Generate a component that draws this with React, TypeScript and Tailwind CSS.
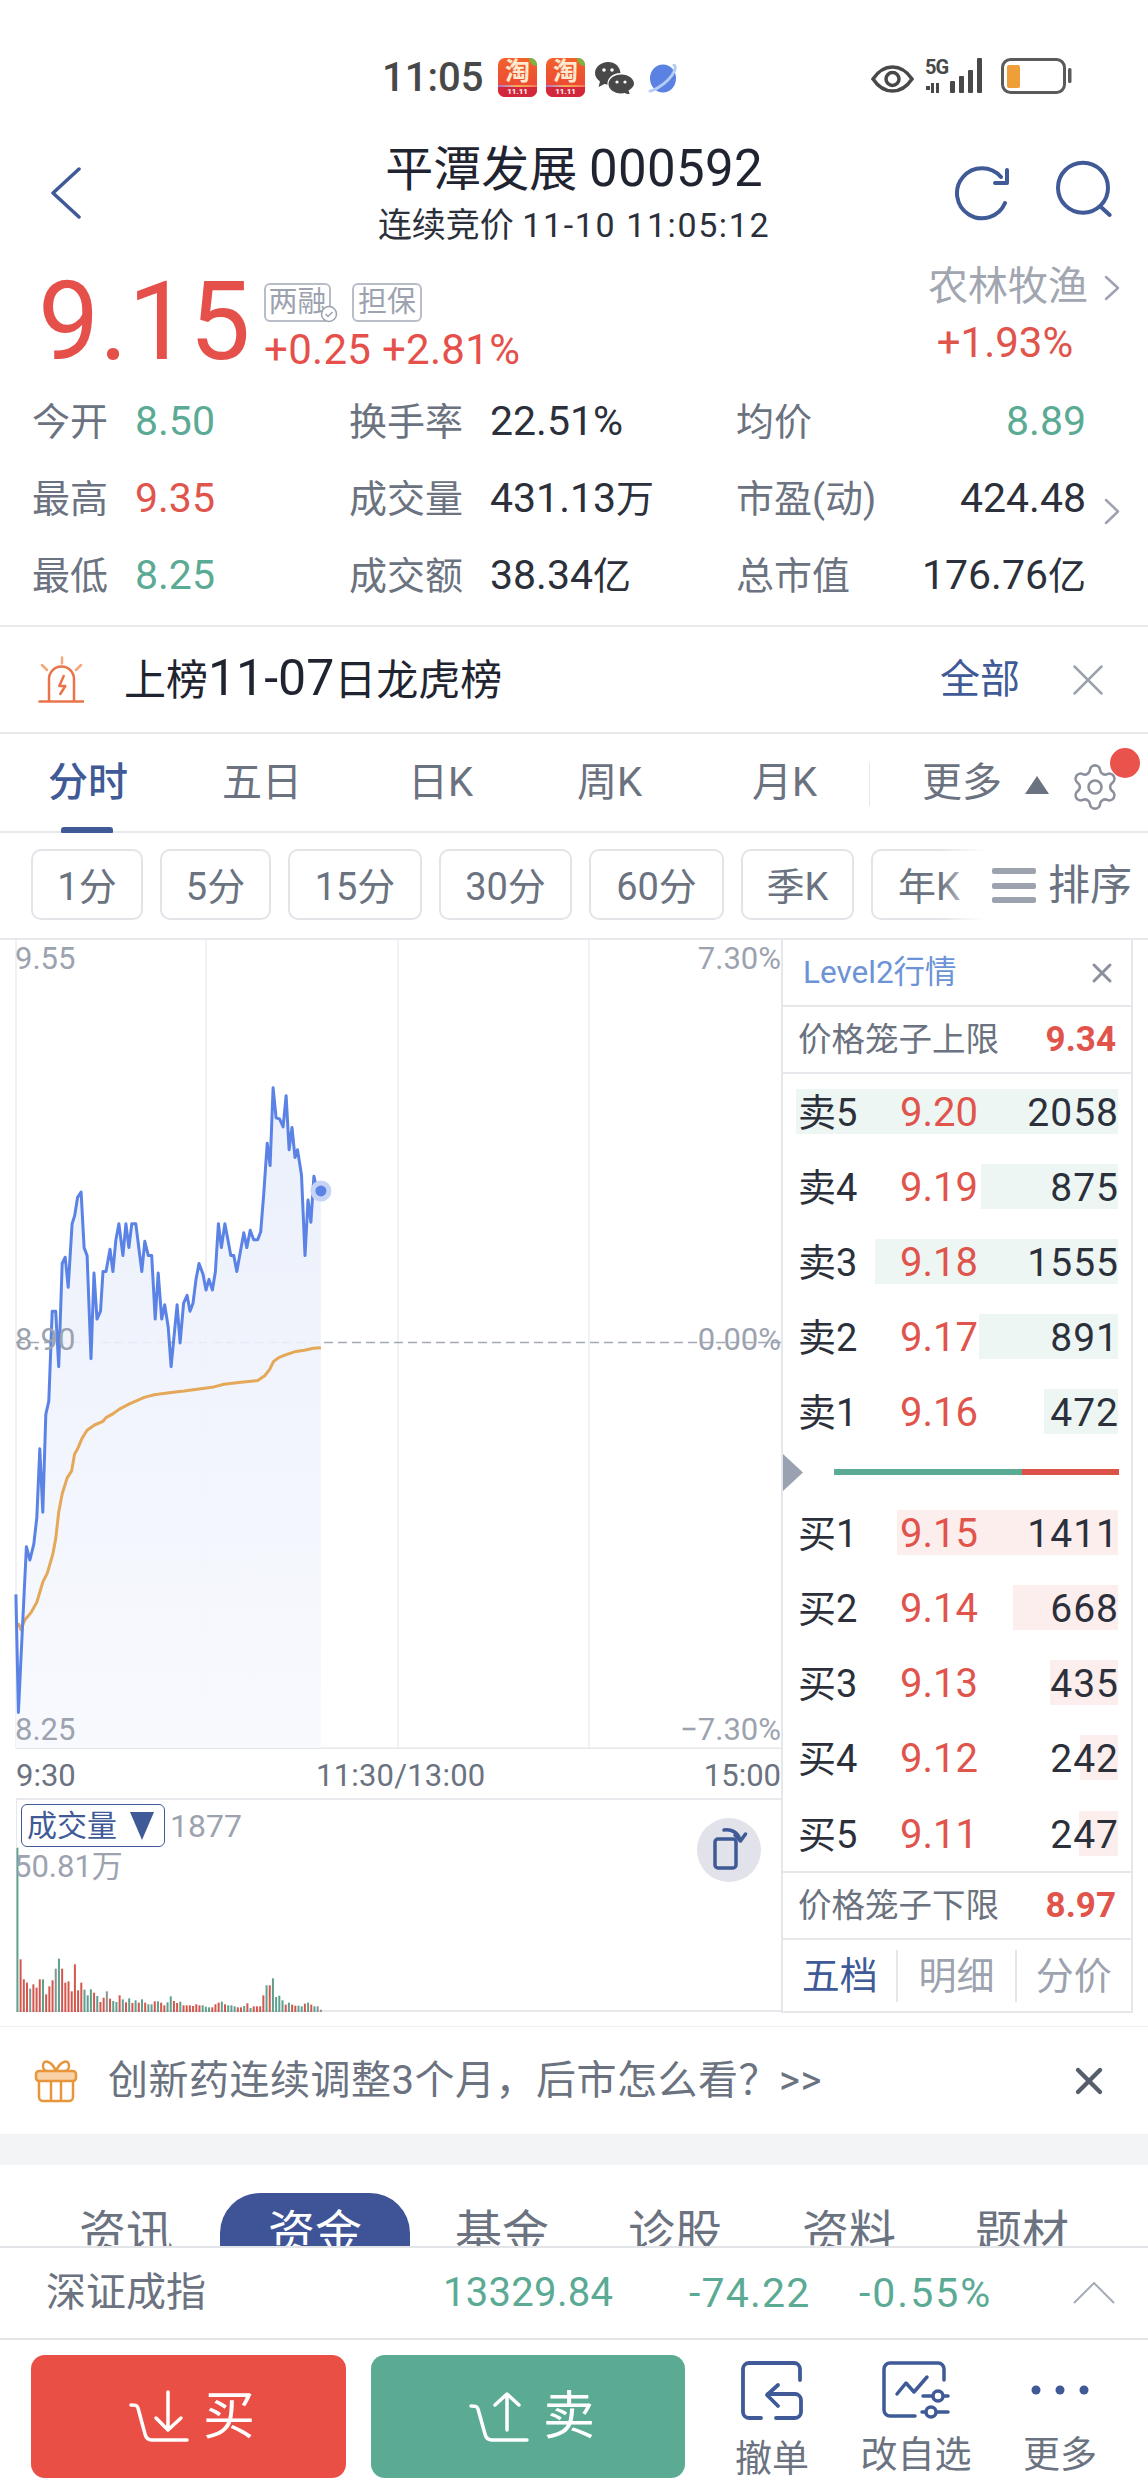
import { Settings, X } from 'lucide-react'

const BLUE = '#3f5a96'

// chart points, read off the reference at 2.01 / 1.889 px per real px
const price: [number, number][] = [
  [32, 1255], [37, 1478], [45, 1320], [53, 1165], [60, 1190], [68, 1160], [74, 1110], [80, 980], [86, 1100], [92, 915],
  [98, 890], [105, 720], [112, 720], [118, 825], [125, 630], [131, 618], [137, 675], [145, 555], [150, 540], [156, 505],
  [163, 495], [169, 600], [175, 615], [183, 810], [189, 648], [195, 735], [202, 720], [207, 645], [213, 645], [221, 603],
  [227, 645], [233, 585], [239, 555], [247, 615], [253, 555], [259, 600], [265, 555], [273, 555], [285, 645], [291, 588],
  [298, 615], [305, 615], [312, 735], [318, 648], [325, 735], [331, 708], [338, 750], [344, 825], [356, 708], [362, 780],
  [369, 705], [376, 690], [382, 720], [388, 705], [394, 660], [400, 630], [408, 650], [414, 680], [420, 660], [427, 680],
  [433, 645], [439, 555], [445, 600], [452, 555], [458, 585], [464, 615], [470, 615], [476, 645], [490, 572], [496, 600],
  [503, 567], [510, 585], [518, 585], [524, 570], [530, 500], [537, 403], [543, 445], [549, 298], [555, 355], [562, 357],
  [569, 372], [575, 313], [581, 415], [587, 373], [593, 430], [598, 415], [606, 463], [613, 615], [619, 510], [625, 552],
  [631, 465], [637, 490], [645, 493],
]
const avg: [number, number][] = [
  [32, 1310], [38, 1312], [42, 1322], [50, 1303], [62, 1290], [74, 1270], [86, 1232], [95, 1215], [106, 1180], [112, 1150],
  [118, 1100], [125, 1065], [135, 1035], [144, 1022], [150, 990], [157, 978], [165, 960], [175, 945], [190, 935], [207, 928],
  [213, 921], [225, 915], [240, 905], [260, 895], [290, 883], [310, 878], [340, 874], [370, 871], [400, 867], [430, 863],
  [450, 858], [480, 855], [518, 851], [532, 842], [542, 830], [550, 815], [560, 808], [575, 802], [595, 796], [612, 794],
  [630, 790], [645, 789],
]
const volTops = [
  262, 597, 657, 667, 685, 672, 682, 657, 657, 702, 678, 660, 625, 595, 625, 667, 663, 693, 612, 690, 667, 688, 705, 687, 697,
  707, 725, 712, 693, 715, 722, 725, 705, 717, 726, 714, 728, 720, 727, 717, 727, 732, 732, 723, 723, 727, 735, 726, 708, 722,
  728, 724, 735, 735, 735, 737, 732, 735, 735, 739, 741, 741, 732, 727, 724, 732, 735, 735, 738, 741, 741, 737, 729, 743, 738,
  738, 738, 705, 675, 675, 654, 710, 706, 720, 733, 727, 733, 736, 736, 738, 730, 727, 733, 738, 738, 748,
]
const volDirs = 'grrrarrrgrrragrrrrrrrgggrgrrarggrgrgrgrgrggrgrrggrrgrrrrrrgggrrrgrgggrrgrgrrrrgrggggrgrrggrgrga'

const toX = (p: number) => p / 2.01
const toY = (p: number) => p / 1.889 - 10
const line = (pts: [number, number][]) => pts.map(([a, b]) => `${toX(a).toFixed(1)},${toY(b).toFixed(1)}`).join(' ')

const sells = [
  { label: '卖5', price: '9.20', vol: 2058 },
  { label: '卖4', price: '9.19', vol: 875 },
  { label: '卖3', price: '9.18', vol: 1555 },
  { label: '卖2', price: '9.17', vol: 891 },
  { label: '卖1', price: '9.16', vol: 472 },
]
const buys = [
  { label: '买1', price: '9.15', vol: 1411 },
  { label: '买2', price: '9.14', vol: 668 },
  { label: '买3', price: '9.13', vol: 435 },
  { label: '买4', price: '9.12', vol: 242 },
  { label: '买5', price: '9.11', vol: 247 },
]

function Taobao() {
  return (
    <div className="relative w-[39px] h-[39px] rounded-[7px] overflow-hidden bg-gradient-to-b from-[#f2622c] to-[#ea3f34] flex flex-col items-center">
      <span className="text-[25px] leading-[28px] font-bold text-[#ffe9cf]">淘</span>
      <div className="absolute right-0 top-0 w-[8px] h-[8px] rounded-bl-[8px] bg-[#7cb342]" />
      <div className="absolute left-0 right-0 bottom-[9px] h-[3px] bg-gradient-to-r from-[#b06ad4] via-[#f5b14a] to-[#f5735a]" />
      <div className="absolute left-0 right-0 bottom-0 h-[10px] bg-[#d3283c] text-white text-[8px] leading-[10px] font-bold text-center">11.11</div>
    </div>
  )
}

function StatusBar() {
  return (
    <div className="h-[130px] flex items-start pt-[58px] pl-[382px]">
      <span className="w-[116px] text-[40px] leading-[40px] font-medium text-[#484848]">11:05</span>
      <Taobao />
      <div className="ml-[9px]">
        <Taobao />
      </div>
      <svg className="ml-[10px] mt-[4px]" width="39" height="32" viewBox="0 0 39 32" fill="#484848">
        <path d="M13 0C6 0 0 5 0 11c0 3.500 2 6.500 5 8.500L3.500 25l6-3c1 .3 2 .4 3 .4-.5-6 5-11.400 13-11.400C25 4.500 20 0 13 0z" />
        <path d="M26 12.500c-7 0-12.500 4.300-12.500 9.500s5.500 9.500 12.500 9.500c1.300 0 2.500-.2 3.700-.5l5.300 2-1.500-4.500c3.300-1.800 5.500-4.700 5.500-6.500 0-5.200-5.500-9.500-12.500-9.500z" />
        <circle cx="9" cy="8" r="1.800" fill="#fff" />
        <circle cx="17" cy="8" r="1.800" fill="#fff" />
        <circle cx="22" cy="20" r="1.600" fill="#fff" />
        <circle cx="30" cy="20" r="1.600" fill="#fff" />
      </svg>
      <svg className="ml-[14px] mt-[6px]" width="30" height="29" viewBox="0 0 30 29">
        <ellipse cx="15" cy="14.500" rx="13" ry="14" fill="#5b82e2" />
        <path d="M26 1c3 2 0 9-6 15S5 27 2 27" fill="none" stroke="#b5cdf5" strokeWidth="3" strokeLinecap="round" />
      </svg>
      <svg className="ml-[193px] mt-[7px]" width="43" height="28" viewBox="0 0 43 28" fill="none" stroke="#484848">
        <path d="M2 14C8 5 14 2 21.500 2S35 5 41 14c-6 9-12 12-19.500 12S8 23 2 14z" strokeWidth="3.500" />
        <circle cx="21.500" cy="14" r="6.500" strokeWidth="3.500" />
      </svg>
      <div className="ml-[11px] relative w-[60px] h-[36px]">
        <span className="absolute left-0 top-[-1px] text-[20px] leading-[20px] font-bold text-[#484848] tracking-[-1px]">5G</span>
        <svg className="absolute left-0 top-0" width="60" height="36" viewBox="0 0 60 36" fill="#484848">
          <rect x="1" y="28" width="4" height="4" />
          <rect x="6" y="25" width="3" height="10" />
          <rect x="11" y="25" width="3" height="10" />
          <rect x="25" y="23" width="5" height="12" rx="1" />
          <rect x="34" y="18" width="5" height="17" rx="1" />
          <rect x="43" y="12" width="5" height="23" rx="1" />
          <rect x="52" y="0" width="5" height="35" rx="1" />
        </svg>
      </div>
      <svg className="ml-[16px]" width="72" height="36" viewBox="0 0 72 36" fill="none">
        <rect x="1.500" y="1.500" width="62" height="33" rx="8" stroke="#5a5a5a" strokeWidth="3" />
        <rect x="6" y="7" width="13" height="23" rx="2" fill="#ee9f38" />
        <rect x="67" y="10" width="3.500" height="15" rx="1.500" fill="#5a5a5a" />
      </svg>
    </div>
  )
}

function Header() {
  return (
    <div className="h-[125px] grid grid-cols-[1fr_auto_1fr]">
      <div className="pl-[50px] pt-[37px]">
        <svg width="32" height="52" viewBox="0 0 32 52" fill="none" stroke={BLUE} strokeWidth="3.500" strokeLinecap="round" strokeLinejoin="round">
          <path d="M29 2 3 26l26 24" />
        </svg>
      </div>
      <div className="flex flex-col items-center pt-[15px]">
        <div className="text-[48px] leading-[48px] text-[#1f2430]">
          平潭发展 <span className="text-[51px] tracking-[0.3px]">000592</span>
        </div>
        <div className="mt-[14px] text-[34px] leading-[34px] text-[#2b303b]">
          连续竞价 <span className="tracking-[1.6px]">11-10 11:05:12</span>
        </div>
      </div>
      <div className="flex justify-end items-start pt-[30px] pr-[34px]">
        <svg width="62" height="62" viewBox="10 10 62 62" fill="none" stroke={BLUE} strokeWidth="4" strokeLinecap="round" strokeLinejoin="round">
          <path d="M64 53A25 25 0 1 1 60 27" />
          <path d="M66 20v13H54" />
        </svg>
        <svg className="ml-[41px]" width="60" height="60" viewBox="115 10 60 60" fill="none" stroke={BLUE} strokeWidth="4" strokeLinecap="round">
          <circle cx="144" cy="37.700" r="25" />
          <path d="m161.700 56.700 9 8.300" />
        </svg>
      </div>
    </div>
  )
}

const stats = [
  ['今开', '8.50', '', 'text-[#5aaa94]'],
  ['换手率', '22.51%', '', 'text-[#2b303b]'],
  ['均价', '8.89', '', 'text-[#5aaa94]'],
  ['最高', '9.35', '', 'text-[#e0544c]'],
  ['成交量', '431.13', '万', 'text-[#2b303b]'],
  ['市盈(动)', '424.48', '', 'text-[#2b303b]'],
  ['最低', '8.25', '', 'text-[#5aaa94]'],
  ['成交额', '38.34', '亿', 'text-[#2b303b]'],
  ['总市值', '176.76', '亿', 'text-[#2b303b]'],
]

function Quote() {
  return (
    <div className="h-[370px]">
      <div className="flex h-[121px] pl-[38px]">
        <div className="w-[226px] pt-[13px] text-[109px] leading-[108px] text-[#e6504a]">9.15</div>
        <div className="pt-[28px]">
          <div className="flex">
            <div className="relative w-[67px] h-[39px] border-2 border-[#b9bdc8] rounded-[6px] text-[29px] leading-[35px] text-[#9ca3af] text-center">
              两融
              <svg className="absolute right-[-9px] bottom-[-3px]" width="18" height="18" viewBox="0 0 18 18" fill="#fff" stroke="#9ca3af" strokeWidth="1.500">
                <circle cx="9" cy="9" r="7.500" />
                <path d="m5.500 9 2.500 2.500 4.500-4.500" fill="none" />
              </svg>
            </div>
            <div className="ml-[21px] w-[70px] h-[39px] border-2 border-[#b9bdc8] rounded-[6px] text-[29px] leading-[35px] text-[#9ca3af] text-center">担保</div>
          </div>
          <div className="mt-[8px] text-[42px] leading-[40px] tracking-[0.3px] text-[#e6504a] whitespace-nowrap">+0.25 +2.81%</div>
        </div>
        <div className="ml-auto pr-[28px] pt-[12px] flex">
          <div className="w-[156px] flex flex-col items-center">
            <span className="text-[40px] leading-[40px] text-[#a1a6b1] whitespace-nowrap">农林牧渔</span>
            <span className="mt-[16px] text-[42px] leading-[40px] text-[#e0544c] -ml-[6px]">+1.93%</span>
          </div>
          <svg className="ml-[18px] mt-[8px]" width="16" height="26" viewBox="0 0 16 26" fill="none" stroke="#9ca3af" strokeWidth="2.500" strokeLinecap="round" strokeLinejoin="round">
            <path d="m2 2 12 11L2 24" />
          </svg>
        </div>
      </div>
      <div className="mt-[7px] pl-[32px] flex">
        <div className="grid grid-cols-[317px_387px_350px] auto-rows-[77px] w-[1054px]">
          {stats.map(([k, v, suffix, c], i) => (
            <div key={k} className={`flex items-center text-[38px] leading-[40px] whitespace-nowrap ${i % 3 === 2 ? 'justify-between' : ''}`}>
              <span className={`text-[#6b7280] ${i % 3 === 0 ? 'w-[103px]' : i % 3 === 1 ? 'w-[141px]' : ''}`}>{k}</span>
              <span className={c}>
                <span className="text-[41px]">{v}</span>
                {suffix}
              </span>
            </div>
          ))}
        </div>
        <svg className="ml-[18px] mt-[115px]" width="16" height="27" viewBox="0 0 16 27" fill="none" stroke="#9ca3af" strokeWidth="2.500" strokeLinecap="round" strokeLinejoin="round">
          <path d="m2 2 12 11.500L2 25" />
        </svg>
      </div>
    </div>
  )
}

function Notice() {
  return (
    <div className="h-[109px] border-y-2 border-[#e8e9ed] flex items-center pl-[38px]">
      <svg width="46" height="48" viewBox="17 15 46 48" fill="none" strokeLinecap="round" strokeLinejoin="round">
        <g stroke="#e9744a" strokeWidth="2.500">
          <path d="M18.500 60.500h44" />
          <path d="M28 60V38a12.500 12.500 0 0 1 25 0v22" />
          <path d="M42.700 35l-4.400 10h6l-5 8" />
          <path d="M41 16.500v6M21 24l5 5M60 24l-5 5" stroke="#f2a77c" />
        </g>
      </svg>
      <span className="ml-[40px] text-[42px] leading-[44px] text-[#1f2430] whitespace-nowrap">
        上榜<span className="text-[50px]">11-07</span>日龙虎榜
      </span>
      <span className="ml-auto text-[40px] leading-[40px] text-[#3f5a96]">全部</span>
      <X className="ml-[41px] mr-[33px]" size={54} strokeWidth={1.1} color="#9ca3af" />
    </div>
  )
}

const periodTabs = [
  { t: '五日', ml: 'ml-[94px]', w: 'w-[80px]' },
  { t: '日K', ml: 'ml-[106px]', w: 'w-[60px]' },
  { t: '周K', ml: 'ml-[109px]', w: 'w-[66px]' },
  { t: '月K', ml: 'ml-[109px]', w: 'w-[62px]' },
]

function PeriodTabs() {
  return (
    <div className="h-[99px] border-b-2 border-[#e8e9ed] flex items-start pl-[48px] pt-[29px] text-[40px] leading-[40px] text-[#6b7280] whitespace-nowrap">
      <div className="relative w-[80px] font-medium text-[#3f5a96]">
        分时
        <div className="absolute left-[13px] top-[64px] w-[52px] h-[6px] rounded-t-[3px] rounded-b-[1px] bg-[#3f5a96]" />
      </div>
      {periodTabs.map((p) => (
        <div key={p.t} className={`${p.ml} ${p.w}`}>{p.t}</div>
      ))}
      <div className="ml-[55px] w-[1px] h-[43px] bg-[#e5e7eb]" />
      <div className="ml-[52px] w-[80px]">更多</div>
      <svg className="ml-[23px] mt-[13px]" width="24" height="18" viewBox="0 0 24 18" fill="#6b7280">
        <path d="M12 0 24 18H0z" />
      </svg>
      <div className="relative ml-[20px] -mt-[2px]">
        <Settings size={52} strokeWidth={1.2} color="#8b909c" />
        <div className="absolute left-[41px] top-[-13px] w-[30px] h-[30px] rounded-full bg-[#ea524c]" />
      </div>
    </div>
  )
}

const chips = [
  { t: '1分', w: 'w-[112px]' },
  { t: '5分', w: 'w-[111px]' },
  { t: '15分', w: 'w-[134px]' },
  { t: '30分', w: 'w-[133px]' },
  { t: '60分', w: 'w-[135px]' },
  { t: '季K', w: 'w-[113px]' },
]

function Chips() {
  return (
    <div className="h-[107px] border-b-2 border-[#e8e9ed] flex items-start pt-[16px] pl-[31px]">
      <div className="relative w-[954px] flex gap-[17px] overflow-hidden text-[38px] leading-[40px] text-[#6b7280]">
        {chips.map((c) => (
          <div key={c.t} className={`${c.w} h-[71px] shrink-0 border-2 border-[#e3e4e8] rounded-[10px] flex items-center justify-center pt-[5px] whitespace-nowrap`}>{c.t}</div>
        ))}
        <div className="w-[130px] h-[71px] shrink-0 border-2 border-[#e3e4e8] rounded-[10px] flex items-center pl-[25px] pt-[5px] whitespace-nowrap">年K</div>
        <div className="absolute right-0 top-0 w-[45px] h-[71px] bg-gradient-to-r from-white/0 to-white" />
      </div>
      <div className="ml-[7px] mt-[19px] w-[44px] h-[35px] flex flex-col justify-between">
        <div className="h-[6px] rounded-[2px] bg-[#9ca3af]" />
        <div className="h-[6px] rounded-[2px] bg-[#9ca3af]" />
        <div className="h-[6px] rounded-[2px] bg-[#9ca3af]" />
      </div>
      <span className="ml-[12px] mt-[16px] text-[42px] leading-[42px] text-[#6b7280] whitespace-nowrap">排序</span>
    </div>
  )
}

function Canvas() {
  const [lx, ly] = price[price.length - 1]
  return (
    <div className="relative w-[781px] h-[809px] text-[31px] leading-[30px] text-[#9ca3af]">
      <svg className="absolute left-0 top-0" width="781" height="809" viewBox="0 0 781 809" fill="none">
        <defs>
          <linearGradient id="area" x1="0" y1="0" x2="0" y2="1">
            <stop offset="0" stopColor="#e9eefa" />
            <stop offset="1" stopColor="#f7f9fe" />
          </linearGradient>
        </defs>
        {[16, 206, 398, 589].map((x) => (
          <path key={x} d={`M${x} 0V808`} stroke="#ebedf0" strokeWidth="1.500" />
        ))}
        <path d="M16 808.500H781" stroke="#e5e7eb" strokeWidth="2" />
        <path d="M16 402.500H781" stroke="#a3a8b5" strokeWidth="1.500" strokeDasharray="9 5" />
        <polygon points={`${toX(32)},808 ${line(price)} ${toX(645)},808`} fill="url(#area)" fillOpacity="0.9" />
        <polyline points={line(avg)} stroke="#e4a858" strokeWidth="3" strokeLinejoin="round" />
        <polyline points={line(price)} stroke="#5b83e6" strokeWidth="3" strokeLinejoin="round" />
        <circle cx={toX(lx)} cy={toY(ly)} r="10.500" fill="#c5d3f5" />
        <circle cx={toX(lx)} cy={toY(ly)} r="5.500" fill="#5b83e6" />
      </svg>
      <span className="absolute left-[15px] top-[4px]">9.55</span>
      <span className="absolute right-0 top-[4px]">7.30%</span>
      <span className="absolute left-[15px] top-[385px]">8.90</span>
      <span className="absolute right-0 top-[385px]">0.00%</span>
      <span className="absolute left-[15px] top-[775px]">8.25</span>
      <span className="absolute right-0 top-[775px]">−7.30%</span>
    </div>
  )
}

function Volume() {
  return (
    <div className="relative ml-[16px] h-[215px] border-t-2 border-[#e8e9ed]">
      <svg className="absolute left-0 top-[-2px]" width="765" height="215" viewBox="0 0 765 215">
        <path d="M.500 0V49" stroke="#e5e7eb" strokeWidth="1" />
        <path d="M0 213H765" stroke="#e8e9ed" strokeWidth="2" />
        {volTops.map((top, i) => {
          const d = volDirs[i]
          return (
            <rect
              key={i}
              x={(35 + i * 6.42) / 2.01 - 17}
              y={(top - 755) / 3 + 214}
              width="2"
              height={(755 - top) / 3}
              fill={d === 'r' ? '#d4574e' : d === 'g' ? '#5f9f8d' : '#8a948f'}
            />
          )
        })}
      </svg>
      <div className="relative flex items-start pt-[4px] pl-[5px]">
        <div className="w-[144px] h-[43px] bg-white border-[1.500px] border-[#3f5a96] rounded-[6px] flex items-center pl-[5px] text-[30px] leading-[32px] text-[#3f5a96]">
          成交量
          <svg className="ml-[13px]" width="24" height="32" viewBox="0 0 24 32" fill="#3f5a96">
            <path d="M0 2h24L12 30z" />
          </svg>
        </div>
        <span className="ml-[5px] mt-[4px] text-[32px] leading-[36px] text-[#9ca3af]">1877</span>
      </div>
      <div className="relative -ml-[2px] pt-[5px] text-[31px] leading-[30px] text-[#9ca3af]">50.81万</div>
      <div className="absolute left-[681px] top-[18px] w-[64px] h-[64px] rounded-full bg-[#e2e3ea]">
        <svg width="64" height="64" viewBox="0 0 64 64" fill="none" stroke="#3f5a96" strokeWidth="3.500" strokeLinecap="round" strokeLinejoin="round">
          <rect x="18" y="21" width="21" height="29" rx="3" />
          <path d="M27 12c7-1 14 2 16 10" />
          <path d="m38 17 5.500 6 5-7" />
        </svg>
      </div>
    </div>
  )
}

function BookRow({ label, price, vol, tint, className = '' }: { label: string; price: string; vol: number; tint: string; className?: string }) {
  return (
    <div className={`relative h-[75px] flex items-center pl-[15px] pr-[12px] pt-[2px] ${className}`}>
      <div className={`absolute right-[13px] top-[15px] h-[45px] ${tint}`} style={{ width: vol * 0.1565 }} />
      <span className="relative w-[102px] text-[38px] leading-[40px] text-[#2b303b]">{label}</span>
      <span className="relative text-[40px] leading-[40px] text-[#e0544c]">{price}</span>
      <span className="relative ml-auto text-[39px] leading-[40px] tracking-[1px] text-[#2b303b]">{vol}</span>
    </div>
  )
}

function LimitRow({ label, value, border }: { label: string; value: string; border?: string }) {
  return (
    <div className={`h-[67px] ${border} border-[#e5e7eb] flex items-center pl-[15px] pr-[15px]`}>
      <span className="text-[33.500px] leading-[40px] text-[#6b7280] whitespace-nowrap">{label}</span>
      <span className="ml-auto text-[35px] leading-[40px] font-bold text-[#e0544c]">{value}</span>
    </div>
  )
}

function Book() {
  return (
    <div className="w-[352px] h-[1073px] border-x-2 border-b-2 border-[#e5e7eb]">
      <div className="h-[67px] border-b-2 border-[#e5e7eb] flex items-center pl-[20px] pr-[13px]">
        <span className="text-[31.500px] leading-[32px] text-[#6b93d6] whitespace-nowrap">Level2行情</span>
        <X className="ml-auto" size={32} strokeWidth={2.2} color="#8b909c" />
      </div>
      <LimitRow label="价格笼子上限" value="9.34" border="border-b-2" />
      {sells.map((r) => (
        <BookRow key={r.label} {...r} tint="bg-[#edf6f3]" />
      ))}
      <div className="relative h-[46px] flex items-center">
        <svg width="20" height="37" viewBox="0 0 20 37" fill="#9aa1b1">
          <path d="M0 0 20 18.500 0 37z" />
        </svg>
        <div className="ml-[31px] w-[188px] h-[6px] bg-[#5aaa94]" />
        <div className="w-[97px] h-[6px] bg-[#dc5148]" />
      </div>
      {buys.map((r, i) => (
        <BookRow key={r.label} {...r} tint="bg-[#fceeed]" className={i === 4 ? 'mt-[1px]' : ''} />
      ))}
      <div className="h-[2px] border-b-2 border-[#e5e7eb]" />
      <LimitRow label="价格笼子下限" value="8.97" border="border-b-2" />
      <div className="h-[70px] flex items-center pt-[2px] text-[38px] leading-[40px] text-[#9ca3af] text-center">
        <span className="w-[114px] text-[#3f5a96]">五档</span>
        <div className="w-[2px] h-[52px] bg-[#e5e7eb]" />
        <span className="w-[117px]">明细</span>
        <div className="w-[2px] h-[52px] bg-[#e5e7eb]" />
        <span className="w-[115px]">分价</span>
      </div>
    </div>
  )
}

function Banner() {
  return (
    <div className="h-[107px] flex items-center pl-[34px]">
      <svg width="44" height="44" viewBox="0 0 44 44" fill="none" stroke="#e8963c" strokeWidth="2.500" strokeLinecap="round" strokeLinejoin="round">
        <path d="M22 12C17 1 9 0 9 7c0 3 2 5 4 5M22 12C27 1 35 0 35 7c0 3-2 5-4 5" />
        <rect x="2" y="12" width="40" height="10" rx="3" fill="#f8d2a6" />
        <path d="M5 22v16a4 4 0 0 0 4 4h26a4 4 0 0 0 4-4V22M17 22v20M27 22v20" />
      </svg>
      <span className="ml-[30px] text-[40px] leading-[40px] tracking-[0.5px] text-[#6b7280] whitespace-nowrap">创新药连续调整3个月，后市怎么看？&gt;&gt;</span>
      <X className="ml-auto mr-[37px]" size={44} strokeWidth={2.4} color="#565d6b" />
    </div>
  )
}

function InfoTabs() {
  return (
    <div className="h-[81px] overflow-hidden flex items-start pl-[79px] pt-[28px] text-[47px] leading-[46px] text-[#6b7280]">
      <span className="w-[95px] pt-[17px]">资讯</span>
      <div className="ml-[46px] w-[190px] h-[100px] shrink-0 rounded-[40px] bg-[#3f5496] text-white text-center pt-[17px]">资金</div>
      <span className="ml-[45px] w-[95px] pt-[17px]">基金</span>
      <span className="ml-[78px] w-[95px] pt-[17px]">诊股</span>
      <span className="ml-[79px] w-[95px] pt-[17px]">资料</span>
      <span className="ml-[78px] w-[95px] pt-[17px]">题材</span>
    </div>
  )
}

function IndexBar() {
  return (
    <div className="h-[94px] border-y-2 border-[#e3e4e8] flex items-center pl-[46px] text-[41px] leading-[40px] text-[#5aaa94]">
      <span className="w-[397px] text-[#6b7280] text-[40px]">深证成指</span>
      <span className="w-[246px] text-[40px] tracking-[0.3px]">13329.84</span>
      <span className="w-[170px] tracking-[1.2px]">-74.22</span>
      <span className="w-[214px] tracking-[2px]">-0.55%</span>
      <svg width="42" height="22" viewBox="0 0 42 22" fill="none" stroke="#a5abb7" strokeWidth="2">
        <path d="M1 21 21 1l20 20" />
      </svg>
    </div>
  )
}

function Actions() {
  return (
    <div className="h-[152px] flex items-start pl-[31px] pt-[15px]">
      <div className="w-[315px] h-[123px] rounded-[14px] bg-[#ea4f46] flex items-center pl-[98px] text-white">
        <svg width="60" height="54" viewBox="8 8 60 54" fill="none" stroke="#fff" strokeWidth="3.500" strokeLinecap="round" strokeLinejoin="round">
          <path d="M10 23c4 0 6 0 7 3l7 26c1 4 3 6 7 6h35" />
          <path d="M47 10v36M35 36l12 12 13-12" />
        </svg>
        <span className="ml-[14px] text-[52px] leading-[52px]">买</span>
      </div>
      <div className="ml-[25px] w-[314px] h-[123px] rounded-[14px] bg-[#5aaa94] flex items-center pl-[98px] text-white">
        <svg width="60" height="54" viewBox="349 8 60 54" fill="none" stroke="#fff" strokeWidth="3.500" strokeLinecap="round" strokeLinejoin="round">
          <path d="M351 24c4 0 6 0 7 3l7 25c1 4 3 6 7 6h35" />
          <path d="M387 48V12M375 23l12-11 12 11" />
        </svg>
        <span className="ml-[14px] text-[52px] leading-[52px]">卖</span>
      </div>
      <div className="flex text-[37px] leading-[36px] text-[#6b7280] whitespace-nowrap">
        <div className="ml-[15px] w-[144px] flex flex-col items-center mt-[6px]">
          <svg width="62" height="60" viewBox="21 11 62 60" fill="none" stroke={BLUE} strokeWidth="3.800" strokeLinecap="round" strokeLinejoin="round">
            <path d="M80 30V19a6 6 0 0 0-6-6H29a6 6 0 0 0-6 6v43a6 6 0 0 0 6 6h12" />
            <path d="M56 68h19a6 6 0 0 0 6-6V50a6 6 0 0 0-6-6H48" />
            <path d="M58 35 47 45l11 11" />
          </svg>
          <span className="mt-[21px]">撤单</span>
        </div>
        <div className="w-[144px] flex flex-col items-center mt-[6px]">
          <svg width="68" height="60" viewBox="162 11 68 60" fill="none" stroke={BLUE} strokeWidth="3.500" strokeLinecap="round" strokeLinejoin="round">
            <path d="M224 30V19a6 6 0 0 0-6-6h-48a6 6 0 0 0-6 6v41a6 6 0 0 0 6 6h25" />
            <path d="m177 44 9-11 8 9 13-15" />
            <path d="M203 46h25M202 62h26" />
            <circle cx="218" cy="46" r="5" fill="#fff" />
            <circle cx="211" cy="62" r="5" fill="#fff" />
          </svg>
          <span className="mt-[17px]">改自选</span>
        </div>
        <div className="w-[144px] flex flex-col items-center mt-[6px]">
          <svg width="68" height="60" viewBox="0 0 68 60" fill={BLUE}>
            <circle cx="10" cy="29" r="4.500" />
            <circle cx="34" cy="29" r="4.500" />
            <circle cx="58" cy="29" r="4.500" />
          </svg>
          <span className="mt-[17px]">更多</span>
        </div>
      </div>
    </div>
  )
}

export default function App() {
  return (
    <div className="w-[1148px] h-[2492px] overflow-hidden bg-white font-[Roboto,'Noto_Sans_CJK_SC',sans-serif]">
      <StatusBar />
      <Header />
      <Quote />
      <Notice />
      <PeriodTabs />
      <Chips />
      <div className="flex h-[1073px]">
        <div className="w-[781px]">
          <Canvas />
          <div className="h-[49px] flex pl-[16px] pt-[12px] text-[31px] leading-[30px] text-[#6b7280] whitespace-nowrap">
            <span className="w-[301px]">9:30</span>
            <span className="w-[389px] tracking-[0.2px]">11:30/13:00</span>
            <span>15:00</span>
          </div>
          <Volume />
        </div>
        <Book />
      </div>
      <div className="h-[14px] border-b border-[#f0f1f3]" />
      <Banner />
      <div className="h-[31px] bg-[#f3f4f6]" />
      <InfoTabs />
      <IndexBar />
      <Actions />
    </div>
  )
}
